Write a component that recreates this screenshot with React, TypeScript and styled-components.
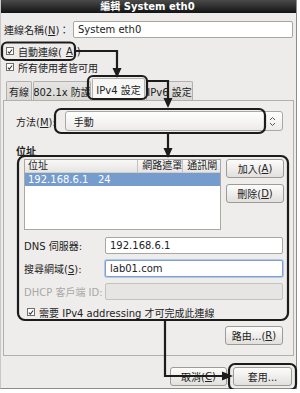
import React from 'react';
import styled, {createGlobalStyle} from 'styled-components';

const GlobalStyle = createGlobalStyle`
    * {
        box-sizing: border-box;
    }
    body {
        margin: 0;
        background: #ffffff;
        font-family: "DejaVu Sans", "Noto Sans CJK TC", sans-serif;
        font-size: 10px;
        color: #222222;
    }
`

const ink = '#1c1c1c';

const CheckIcon = () => (
    <svg width="7" height="7" viewBox="0 0 7 7">
        <path d="M1 3.6 L2.8 5.4 L6 1.2" fill="none" stroke="#333" strokeWidth="1.2"/>
    </svg>
);

const ComboArrows = () => (
    <svg width="7" height="11" viewBox="0 0 7 11">
        <path d="M1 4 L3.5 1.5 L6 4 M1 7 L3.5 9.5 L6 7" fill="none" stroke="#555" strokeWidth="1"/>
    </svg>
);

const Annotations = () => (
    <Overlay width="300" height="393" viewBox="0 0 300 393">
        <g fill="none" stroke={ink} strokeWidth="2.2">
            <rect x="2" y="42.5" width="73" height="17.5" rx="5"/>
            <path d="M75 51 H117 V70"/>
            <rect x="88" y="76" width="59" height="23" rx="5"/>
            <path d="M147 81 H168 V100"/>
            <rect x="55" y="109" width="210" height="24" rx="6"/>
            <path d="M168 133 V150"/>
            <rect x="18" y="156" width="270" height="164" rx="7"/>
            <path d="M165 320 V376 H224"/>
            <rect x="229" y="364" width="67" height="26" rx="6"/>
        </g>
        <g fill={ink}>
            <path d="M112.5 68 H121.5 L117 78 Z"/>
            <path d="M163.5 98 H172.5 L168 108 Z"/>
            <path d="M163.5 148 H172.5 L168 158 Z"/>
            <path d="M222 371.5 V380.5 L233 376 Z"/>
        </g>
    </Overlay>
);

export default function App() {
    return (
        <>
            <GlobalStyle/>
            <Window>
                <TitleBar>編輯 System eth0</TitleBar>
                <Body>
                    <NameRow>
                        <Label>連線名稱(<U>N</U>)：</Label>
                        <Input $width={220}>System eth0</Input>
                    </NameRow>
                    <Checks>
                        <CheckRow $indent={3}>
                            <Box><CheckIcon/></Box>
                            自動連線(<U>A</U>)
                        </CheckRow>
                        <CheckRow $indent={3}>
                            <Box><CheckIcon/></Box>
                            所有使用者皆可用
                        </CheckRow>
                    </Checks>
                    <Tabs>
                        <Tab $w={26}>有線</Tab>
                        <Tab $w={58}>802.1x 防護</Tab>
                        <Tab $w={53} $active>IPv4 設定</Tab>
                        <Tab $w={47}>IPv6 設定</Tab>
                    </Tabs>
                    <Panel>
                        <MethodRow>
                            <Label>方法(<U>M</U>):</Label>
                            <Combo>
                                手動
                                <ComboArrows/>
                            </Combo>
                        </MethodRow>
                        <SectionTitle>位址</SectionTitle>
                        <Section>
                            <AddressArea>
                                <AddressList>
                                    <ListHeader>
                                        <Col $w={113}>位址</Col>
                                        <Col $w={45} $sep>網路遮罩</Col>
                                        <Col $w={38} $sep>通訊閘</Col>
                                    </ListHeader>
                                    <ListRow>
                                        <Col $w={113}>192.168.6.1&nbsp;&nbsp;&nbsp;24</Col>
                                    </ListRow>
                                </AddressList>
                                <ButtonColumn>
                                    <Button $w={58}>加入(<U>A</U>)</Button>
                                    <Button $w={58}>刪除(<U>D</U>)</Button>
                                </ButtonColumn>
                            </AddressArea>
                            <Fields>
                                <FieldRow>
                                    <Label>DNS 伺服器:</Label>
                                    <Input $width={178}>192.168.6.1</Input>
                                </FieldRow>
                                <FieldRow>
                                    <Label>搜尋網域(<U>S</U>):</Label>
                                    <Input $width={178} $focused>lab01.com</Input>
                                </FieldRow>
                                <FieldRow>
                                    <Label $disabled>DHCP 客戶端 ID:</Label>
                                    <Input $width={178} $disabled/>
                                </FieldRow>
                            </Fields>
                            <RequireRow>
                                <Box><CheckIcon/></Box>
                                需要 IPv4 addressing 才可完成此連線
                            </RequireRow>
                        </Section>
                        <RouteRow>
                            <Button $w={58}>路由...(<U>R</U>)</Button>
                        </RouteRow>
                    </Panel>
                    <ButtonBar>
                        <Button $w={57}>取消(<U>C</U>)</Button>
                        <Button $w={59}>套用...</Button>
                    </ButtonBar>
                </Body>
                <Annotations/>
            </Window>
        </>
    );
}

const Window = styled.div`
    position: relative;
    width: 297px;
    height: 389px;
    background: #edeceb;
    border-left: 1px solid #c9c8c6;
    border-right: 1px solid #8d8c8a;
    border-bottom: 1px solid #8d8c8a;
    display: flex;
    flex-direction: column;
`

const TitleBar = styled.div`
    height: 13px;
    background: linear-gradient(#4a4a4a, #141414);
    color: #ffffff;
    font-weight: bold;
    font-size: 10px;
    line-height: 13px;
    text-align: center;
    padding-right: 2px;
`

const Body = styled.div`
    display: flex;
    flex-direction: column;
    padding: 8px 3px 0 2px;
`

const Label = styled.span<{ $disabled?: boolean }>`
    color: ${p => p.$disabled ? '#a9a8a6' : '#222222'};
    white-space: nowrap;
`

const U = styled.span`
    text-decoration: underline;
`

const Input = styled.div<{ $width: number, $focused?: boolean, $disabled?: boolean }>`
    width: ${p => p.$width}px;
    height: 17px;
    padding: 0 4px;
    line-height: 15px;
    font-size: 10px;
    background: ${p => p.$disabled ? '#e6e5e3' : '#ffffff'};
    border: 1px solid ${p => p.$focused ? '#7f9ec9' : p.$disabled ? '#c3c2bf' : '#a7a6a3'};
    border-radius: 2px;
    box-shadow: ${p => p.$focused ? '0 0 0 1px #b4c9e6' : 'none'};
    white-space: nowrap;
`

const NameRow = styled.div`
    display: flex;
    align-items: center;
    justify-content: space-between;
    padding-left: 1px;
`

const Checks = styled.div`
    display: flex;
    flex-direction: column;
    margin-top: 5px;
`

const CheckRow = styled.div<{ $indent: number }>`
    display: flex;
    align-items: center;
    gap: 4px;
    height: 16px;
    padding-left: ${p => p.$indent}px;
    white-space: nowrap;
`

const RequireRow = styled(CheckRow).attrs({$indent: 3})`
    margin-top: 4px;
`

const Box = styled.span`
    width: 8px;
    height: 8px;
    border: 1px solid #6f6e6c;
    background: #ffffff;
    display: flex;
    align-items: center;
    justify-content: center;
`

const Tabs = styled.div`
    display: flex;
    align-items: flex-end;
    gap: 1px;
    height: 22px;
    padding-left: 3px;
    margin-top: 3px;
`

const Tab = styled.div<{ $w: number, $active?: boolean }>`
    width: ${p => p.$w}px;
    height: ${p => p.$active ? 22 : 19}px;
    background: ${p => p.$active ? '#f7f7f6' : 'linear-gradient(#e6e5e3, #d8d7d4)'};
    border: 1px solid #b1b0ad;
    border-bottom: none;
    border-radius: 2px 2px 0 0;
    display: flex;
    align-items: center;
    justify-content: center;
    white-space: nowrap;
    overflow: hidden;
`

const Panel = styled.div`
    height: 256px;
    margin-right: -1px;
    background: #eeedeb;
    border: 1px solid #b1b0ad;
    padding: 10px 10px 0 12px;
    display: flex;
    flex-direction: column;
`

const MethodRow = styled.div`
    display: flex;
    align-items: center;
    gap: 9px;
`

const Combo = styled.div`
    flex: 1;
    height: 20px;
    background: linear-gradient(#ffffff, #ecebe8);
    border: 1px solid #a9a8a5;
    border-radius: 3px;
    padding: 0 6px 0 8px;
    display: flex;
    align-items: center;
    justify-content: space-between;
`

const SectionTitle = styled.div`
    font-weight: bold;
    margin-top: 14px;
    height: 13px;
    line-height: 13px;
`

const Section = styled.div`
    display: flex;
    flex-direction: column;
    padding-left: 8px;
    margin-top: 1px;
`

const AddressArea = styled.div`
    display: flex;
    gap: 5px;
`

const AddressList = styled.div`
    width: 197px;
    height: 71px;
    background: #ffffff;
    border: 1px solid #a9a8a5;
`

const ListHeader = styled.div`
    display: flex;
    height: 13px;
    background: linear-gradient(#f8f8f7, #e6e5e2);
    border-bottom: 1px solid #d0cfcc;
    line-height: 12px;
`

const Col = styled.div<{ $w: number, $sep?: boolean }>`
    width: ${p => p.$w}px;
    padding-left: ${p => p.$sep ? 4 : 3}px;
    border-left: ${p => p.$sep ? '1px solid #c2c1be' : 'none'};
    white-space: nowrap;
`

const ListRow = styled.div`
    display: flex;
    height: 13px;
    line-height: 13px;
    background: #759ccd;
    color: #ffffff;
`

const ButtonColumn = styled.div`
    display: flex;
    flex-direction: column;
    gap: 6px;
`

const Button = styled.div<{ $w: number }>`
    width: ${p => p.$w}px;
    height: 19px;
    background: linear-gradient(#fcfcfb, #e2e0dd);
    border: 1px solid #9c9b98;
    border-radius: 3px;
    display: flex;
    align-items: center;
    justify-content: center;
    white-space: nowrap;
`

const Fields = styled.div`
    display: flex;
    flex-direction: column;
    gap: 6px;
    margin-top: 7px;
`

const FieldRow = styled.div`
    display: flex;
    align-items: center;
    justify-content: space-between;
`

const RouteRow = styled.div`
    display: flex;
    justify-content: flex-end;
    margin-top: 6px;
`

const ButtonBar = styled.div`
    display: flex;
    justify-content: flex-end;
    gap: 6px;
    margin-top: 11px;
    padding-right: 1px;
`

const Overlay = styled.svg`
    position: absolute;
    top: 0;
    left: -1px;
    pointer-events: none;
`
